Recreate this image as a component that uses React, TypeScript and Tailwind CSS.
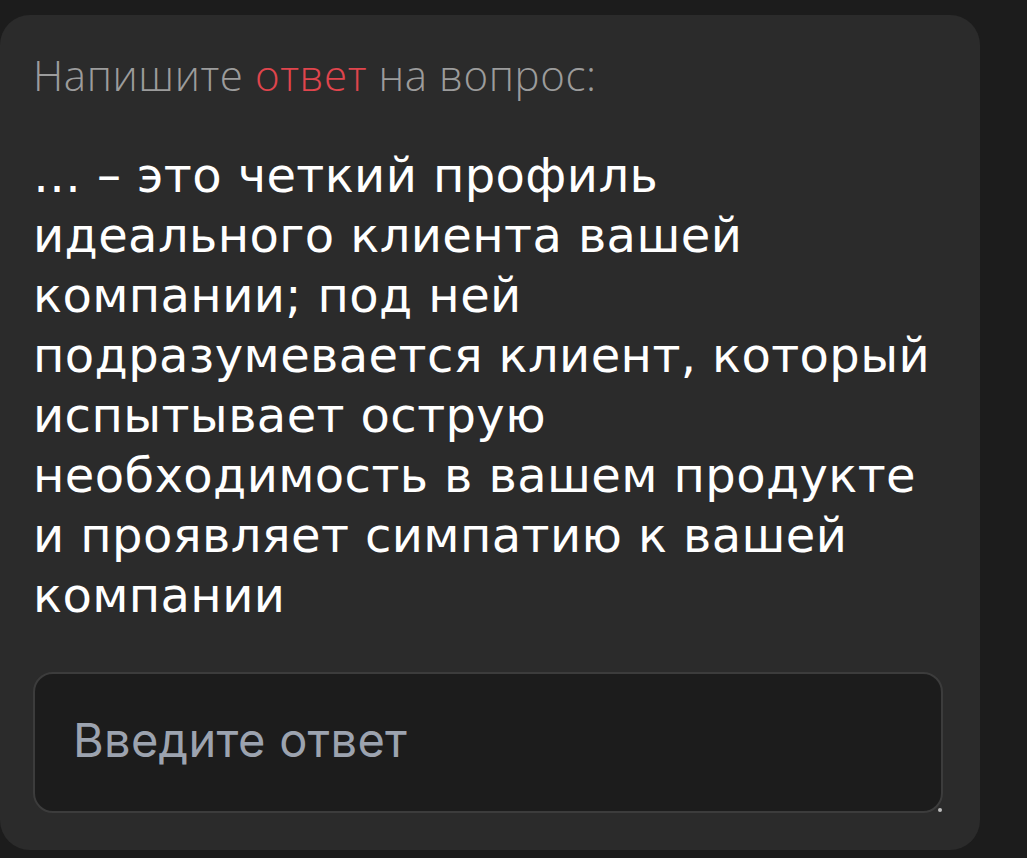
import React from 'react';

const lines = [
  '… – это четкий профиль',
  'идеального клиента вашей',
  'компании; под ней',
  'подразумевается клиент, который',
  'испытывает острую',
  'необходимость в вашем продукте',
  'и проявляет симпатию к вашей',
  'компании',
];

const App: React.FC = () => {
  return (
    <div className="w-full h-[858px] bg-[#1c1c1c] pt-[15px] overflow-hidden">
      <div className="w-[980px] h-[835px] bg-[#2b2b2b] rounded-[30px] pl-[33px] pr-[35px] pt-[37px] flex flex-col">
        {/* Question label */}
        <p className="text-[42px] leading-[46px] font-light text-[#9c9c9c] font-['Open_Sans',sans-serif] tracking-[0.6px] whitespace-nowrap">
          Напишите <span className="text-[#e0454d]">ответ</span> на вопрос:
        </p>

        {/* Question text */}
        <div className="mt-[47px] text-white text-[48px] leading-[60px] tracking-[0.4px] font-['DejaVu_Sans',sans-serif]">
          {lines.map((l, i) => (
            <div key={i} className="whitespace-nowrap">{l}</div>
          ))}
        </div>

        {/* Answer input */}
        <div className="relative mt-[47px]">
          <textarea
            placeholder="Введите ответ"
            className="w-[910px] h-[141px] bg-[#1c1c1c] border-2 border-[#3c3c3c] rounded-[20px] px-[38px] pt-[41px] text-[47px] leading-[50px] tracking-[0.3px] text-white placeholder:text-[#9ca3af] font-['Inter',sans-serif] resize-none outline-none"
          />
          <div className="absolute left-[905px] top-[136px] w-[4px] h-[4px] rounded-full bg-[#bdbdbd]" />
        </div>
      </div>
    </div>
  );
};

export default App;
